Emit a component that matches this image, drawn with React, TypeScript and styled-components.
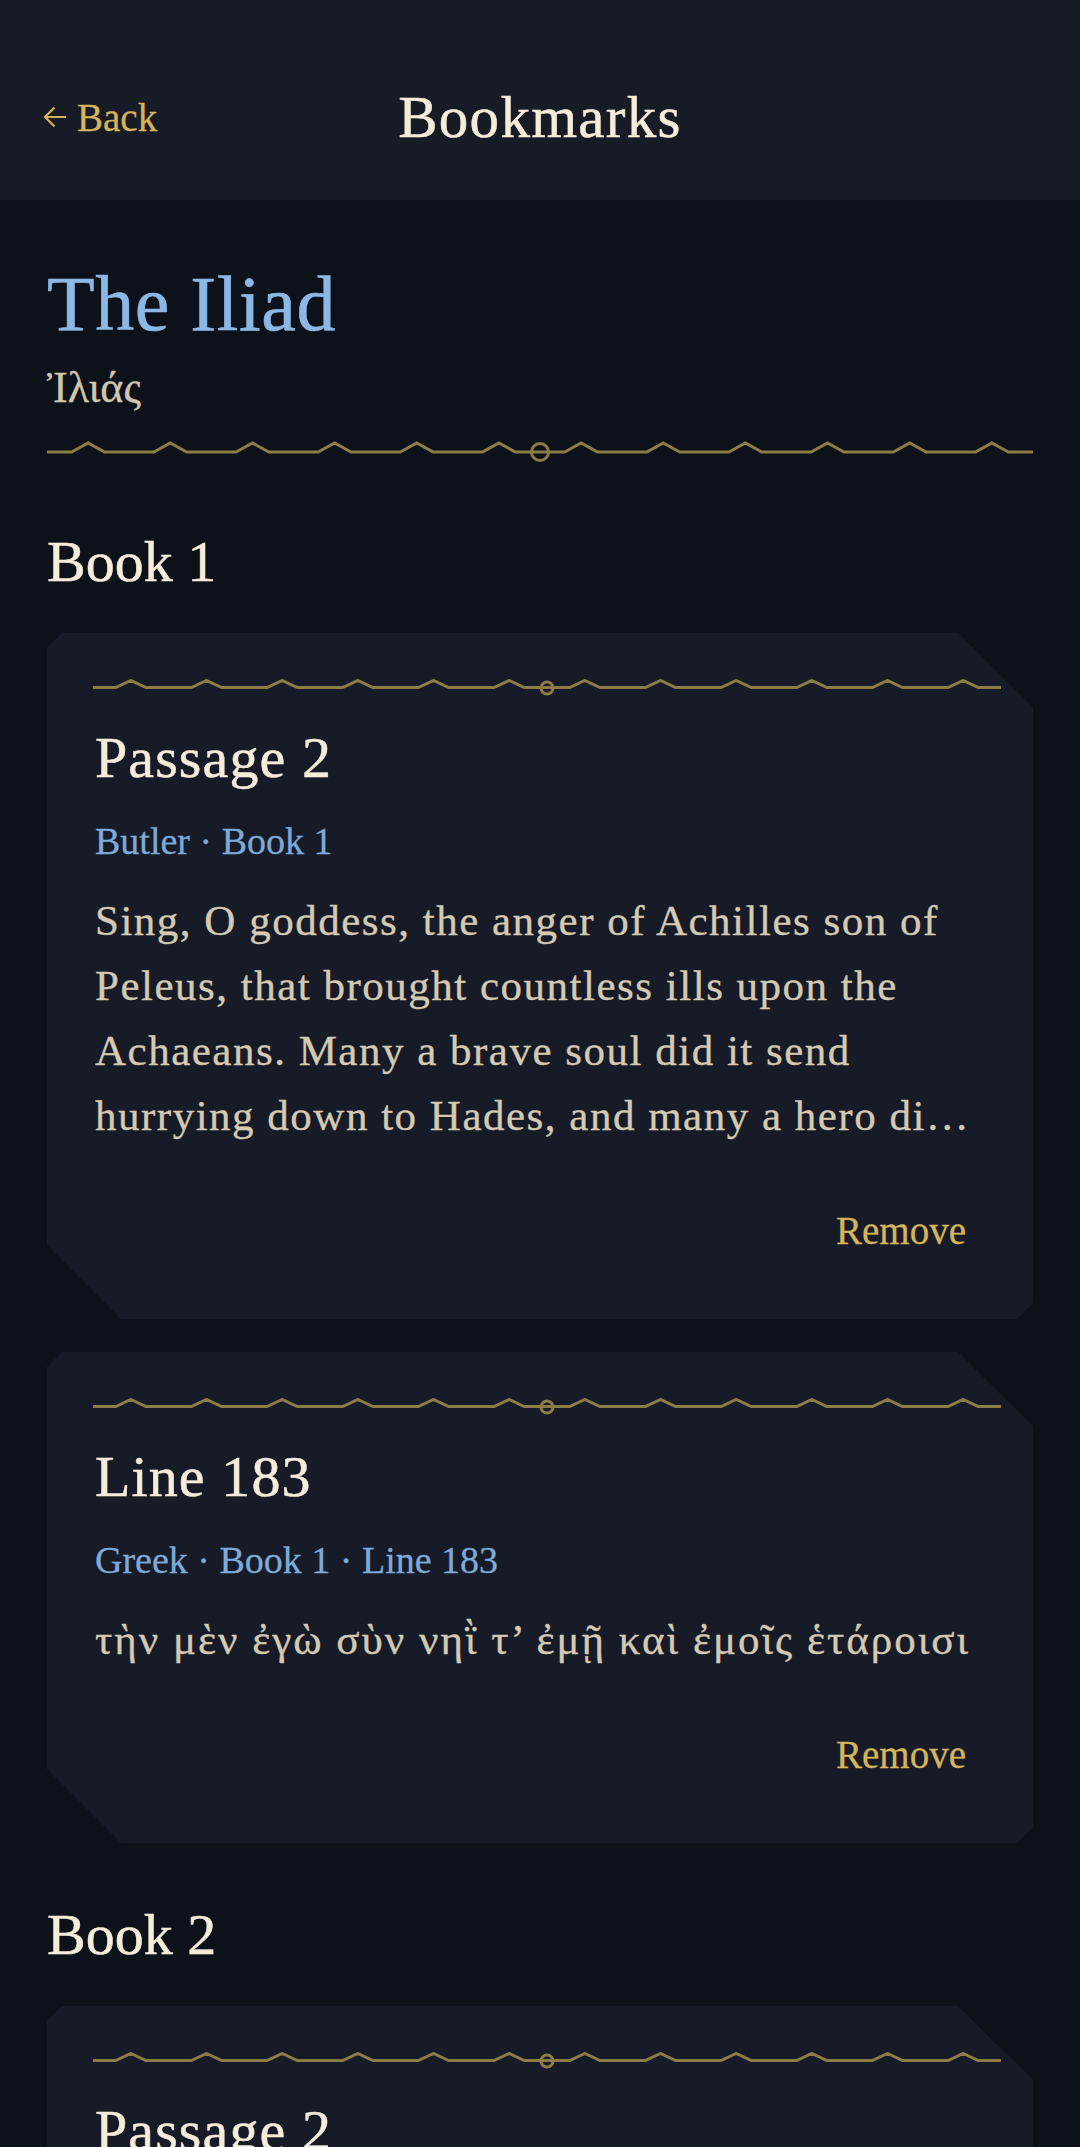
import React from "react";
import styled, { createGlobalStyle } from "styled-components";

const GlobalStyle = createGlobalStyle`
  html, body {
    margin: 0;
    padding: 0;
    background: #0d1119;
  }
  body {
    font-family: "Liberation Serif", "DejaVu Serif", serif;
    -webkit-font-smoothing: antialiased;
  }
  * {
    box-sizing: border-box;
  }
`;

const TopBar = styled.header`
  height: 200px;
  padding: 34px 43px 0;
  background: #161b26;
  display: grid;
  grid-template-columns: 1fr auto 1fr;
  align-items: center;
`;

const BackButton = styled.button`
  justify-self: start;
  display: flex;
  align-items: center;
  gap: 10px;
  padding: 0;
  border: 0;
  background: none;
  color: #d6b45a;
  font-family: "Liberation Serif", serif;
  font-size: 39px;
  line-height: 47px;
  -webkit-text-stroke: 0.3px currentColor;
  cursor: pointer;
`;

const TopTitle = styled.h1`
  margin: 0;
  color: #f5ecd9;
  font-weight: 400;
  font-size: 59px;
  line-height: 70px;
  letter-spacing: 1.3px;
  -webkit-text-stroke: 0.5px currentColor;
`;

const Page = styled.main`
  padding: 57px 47px 120px;
`;

const WorkTitle = styled.h2`
  margin: 0;
  color: #8cb8e6;
  font-weight: 400;
  font-size: 78px;
  line-height: 94px;
  letter-spacing: 0.6px;
  -webkit-text-stroke: 0.6px currentColor;
`;

const WorkOriginal = styled.div`
  margin-top: 11px;
  color: #d2c7ad;
  font-size: 44px;
  line-height: 52px;
  -webkit-text-stroke: 0.3px currentColor;
`;

const OrnamentWrap = styled.div<{ $ring: number }>`
  position: relative;
  height: ${(p) => p.$ring + 2}px;
  svg {
    display: block;
    width: 100%;
    height: 100%;
  }
`;

const Ring = styled.span<{ $ring: number }>`
  position: absolute;
  left: 50%;
  top: 50%;
  width: ${(p) => p.$ring}px;
  height: ${(p) => p.$ring}px;
  transform: translate(-50%, -50%);
  border: 3px solid #8e7c47;
  border-radius: 50%;
`;

const PageOrnament = styled.div`
  margin: 27px 0 7px;
`;

const CardOrnament = styled.div`
  margin: 0 -16px 0 -2px;
`;

const Section = styled.section`
  padding-top: 57px;
`;

const BookHeading = styled.h3`
  margin: 0 0 36px;
  color: #f5ecd9;
  font-weight: 400;
  font-size: 58px;
  line-height: 70px;
  -webkit-text-stroke: 0.5px currentColor;
`;

const CardList = styled.div`
  display: flex;
  flex-direction: column;
  gap: 33px;
`;

const Card = styled.article`
  background: #161b27;
  padding: 46px 48px 59px;
  clip-path: polygon(
    15px 0,
    calc(100% - 75px) 0,
    100% 74px,
    100% calc(100% - 16px),
    calc(100% - 16px) 100%,
    74px 100%,
    0 calc(100% - 74px),
    0 15px
  );
`;

const CardTitle = styled.h4`
  margin: 27px 0 0;
  color: #f5ecd9;
  font-weight: 400;
  font-size: 58px;
  line-height: 70px;
  letter-spacing: 1.1px;
  -webkit-text-stroke: 0.5px currentColor;
`;

const Meta = styled.div`
  margin-top: 25px;
  color: #7eaad9;
  font-size: 38px;
  line-height: 46px;
  -webkit-text-stroke: 0.3px currentColor;
`;

const Excerpt = styled.p<{ $greek?: boolean }>`
  margin: 24px 0 0;
  color: #d5cab1;
  font-size: 43px;
  line-height: 65px;
  letter-spacing: ${(p) => (p.$greek ? "2px" : "1.5px")};
  -webkit-text-stroke: 0.35px currentColor;
  display: -webkit-box;
  -webkit-box-orient: vertical;
  -webkit-line-clamp: 4;
  overflow: hidden;
`;

const Actions = styled.div`
  margin-top: 53px;
  display: flex;
  justify-content: flex-end;
`;

const RemoveButton = styled.button`
  padding: 6px 19px;
  border: 0;
  background: none;
  color: #d6b45a;
  font-family: "Liberation Serif", serif;
  font-size: 39px;
  line-height: 47px;
  -webkit-text-stroke: 0.3px currentColor;
  cursor: pointer;
`;

type Bookmark = {
  id: string;
  title: string;
  meta: string[];
  text: string;
  greek?: boolean;
};

type BookGroup = {
  book: string;
  items: Bookmark[];
};

const groups: BookGroup[] = [
  {
    book: "Book 1",
    items: [
      {
        id: "b1-p2",
        title: "Passage 2",
        meta: ["Butler", "Book 1"],
        text:
          "Sing, O goddess, the anger of Achilles son of Peleus, that brought countless ills upon the Achaeans. Many a brave soul did it send hurrying down to Hades, and many a hero did it yield a prey to dogs and vultures, for so were the counsels of Jove fulfilled from the day on which the son of Atreus, king of men, and great Achilles, first fell out with one another.",
      },
      {
        id: "b1-l183",
        title: "Line 183",
        meta: ["Greek", "Book 1", "Line 183"],
        text: "τὴν μὲν ἐγὼ σὺν νηῒ τ’ ἐμῇ καὶ ἐμοῖς ἑτάροισι",
        greek: true,
      },
    ],
  },
  {
    book: "Book 2",
    items: [
      {
        id: "b2-p2",
        title: "Passage 2",
        meta: ["Butler", "Book 2"],
        text:
          "Now the other gods and the armed warriors on the plain slept soundly, but Jove was wakeful, for he was thinking how to do honour to Achilles, and destroyed much people at the ships of the Achaeans.",
      },
    ],
  },
];

// zigzag band: flat run, small peak, flat run — repeated, stretched to the width
const zigzag = (peaks: number, mid: number, amp: number) => {
  let d = `M0 ${mid}`;
  for (let i = 0; i < peaks; i++) {
    const x = i * 100;
    d += ` L${x + 30} ${mid} L${x + 50} ${mid - amp} L${x + 70} ${mid} L${x + 100} ${mid}`;
  }
  return d;
};

const Ornament = ({ ring, amp }: { ring: number; amp: number }) => {
  const h = ring + 2;
  const mid = h / 2;
  return (
    <OrnamentWrap $ring={ring}>
      <svg viewBox={`0 0 1200 ${h}`} preserveAspectRatio="none">
        <path
          d={zigzag(12, mid, amp)}
          fill="none"
          stroke="#8e7c47"
          strokeWidth={3}
          strokeLinejoin="miter"
          vectorEffect="non-scaling-stroke"
        />
      </svg>
      <Ring $ring={ring} />
    </OrnamentWrap>
  );
};

const BackArrow = () => (
  <svg width="24" height="22" viewBox="0 0 24 22" fill="none">
    <path d="M23 11H2M11.5 1.5L2 11l9.5 9.5" stroke="#d6b45a" strokeWidth="2.2" />
  </svg>
);

const BookmarkCard = ({ item }: { item: Bookmark }) => (
  <Card>
    <CardOrnament>
      <Ornament ring={15} amp={7} />
    </CardOrnament>
    <CardTitle>{item.title}</CardTitle>
    <Meta>{item.meta.join(" · ")}</Meta>
    <Excerpt $greek={item.greek}>{item.text}</Excerpt>
    <Actions>
      <RemoveButton>Remove</RemoveButton>
    </Actions>
  </Card>
);

const App = () => {
  return (
    <>
      <GlobalStyle />
      <TopBar>
        <BackButton>
          <BackArrow />
          Back
        </BackButton>
        <TopTitle>Bookmarks</TopTitle>
        <span />
      </TopBar>
      <Page>
        <WorkTitle>The Iliad</WorkTitle>
        <WorkOriginal>Ἰλιάς</WorkOriginal>
        <PageOrnament>
          <Ornament ring={20} amp={9} />
        </PageOrnament>
        {groups.map((g) => (
          <Section key={g.book}>
            <BookHeading>{g.book}</BookHeading>
            <CardList>
              {g.items.map((item) => (
                <BookmarkCard key={item.id} item={item} />
              ))}
            </CardList>
          </Section>
        ))}
      </Page>
    </>
  );
};

export default App;
